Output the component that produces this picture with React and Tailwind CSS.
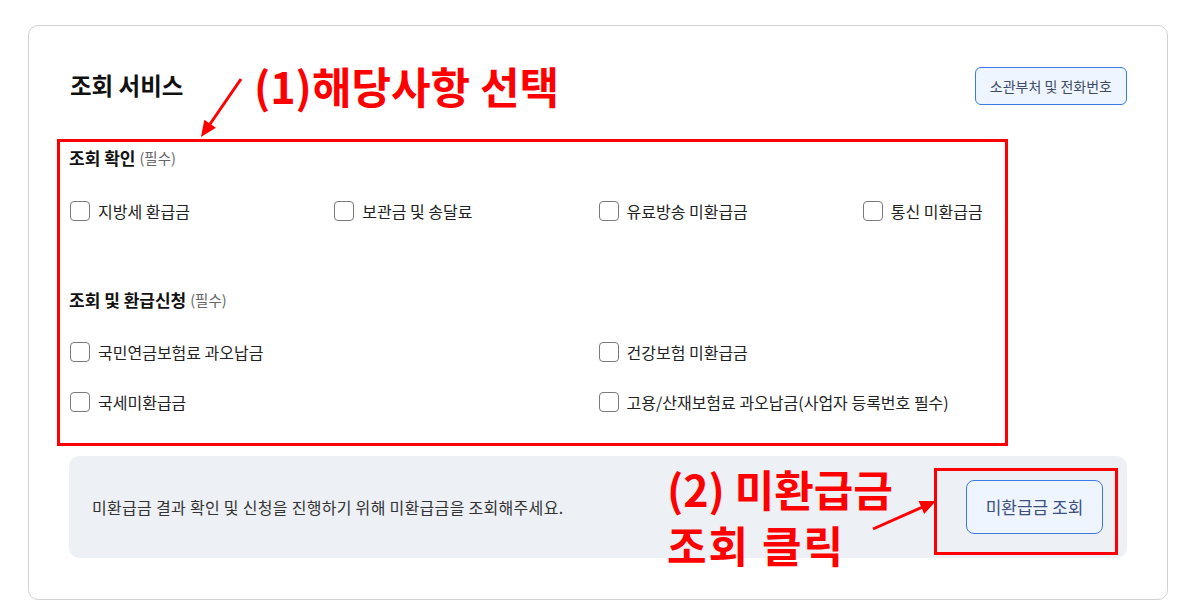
import React from "react";

const Check = ({ label }) => (
  <label className="flex items-center gap-2 h-6 text-[16px] text-[#222]">
    <span className="w-5 h-5 rounded-[4px] border border-[#7a7a7a] bg-white shrink-0" />
    <span>{label}</span>
  </label>
);

const Heading = ({ children }) => (
  <div className="h-6 flex items-center">
    <span className="text-[17px] font-bold text-[#111]">{children}</span>
    <span className="ml-1 text-[14.5px] text-[#666]">(필수)</span>
  </div>
);

export default function App() {
  return (
    <div className="relative w-[1185px] h-[612px] bg-white pt-[25px] pl-[28px] font-['Noto_Sans_CJK_KR',sans-serif]">
      <div className="w-[1140px] rounded-[10px] border border-[#d2d2d2] px-[40px] pt-[41px] pb-[41px]">
        <div className="flex items-center justify-between h-[38px]">
          <h2 className="text-[23.5px] font-bold text-[#111] pl-px">조회 서비스</h2>
          <button className="h-[38px] px-[14px] rounded-[6px] border border-[#3b7be6] bg-[#eef5ff] text-[14px] text-[#3e4b66]">
            소관부처 및 전화번호
          </button>
        </div>

        <div className="mt-[41px]">
          <Heading>조회 확인</Heading>
          <div className="grid grid-cols-4 mt-[29px] pl-px">
            <Check label="지방세 환급금" />
            <Check label="보관금 및 송달료" />
            <Check label="유료방송 미환급금" />
            <Check label="통신 미환급금" />
          </div>
        </div>

        <div className="mt-[65px]">
          <Heading>조회 및 환급신청</Heading>
          <div className="grid grid-cols-2 gap-y-[26px] mt-[28px] pl-px">
            <Check label="국민연금보험료 과오납금" />
            <Check label="건강보험 미환급금" />
            <Check label="국세미환급금" />
            <Check label="고용/산재보험료 과오납금(사업자 등록번호 필수)" />
          </div>
        </div>

        <div className="mt-[42px] h-[102px] rounded-[10px] bg-[#edf0f5] pl-[23px] pr-[24px] flex items-center justify-between">
          <p className="text-[16px] tracking-[0.3px] text-[#333]">미환급금 결과 확인 및 신청을 진행하기 위해 미환급금을 조회해주세요.</p>
          <button className="w-[137px] h-[54px] rounded-[8px] border border-[#3b7be6] bg-[#eef5ff] text-[17px] text-[#3d5080]">
            미환급금 조회
          </button>
        </div>
      </div>

      {/* annotations */}
      <div className="absolute left-[57px] top-[139px] w-[951px] h-[307px] border-[3px] border-[#ff0000] pointer-events-none" />
      <div className="absolute left-[934px] top-[468px] w-[184px] h-[87px] border-[3px] border-[#ff0000] pointer-events-none" />
      <div className="absolute left-[254px] top-[57px] text-[43px] leading-[56px] font-bold text-[#ff0000] whitespace-nowrap">
        (1)해당사항 선택
      </div>
      <div className="absolute left-[667px] top-[460px] text-[43px] leading-[56px] font-bold text-[#ff0000] whitespace-nowrap">
        (2) 미환급금
        <br />
        <span className="tracking-[2px]">조회 클릭</span>
      </div>
      <svg className="absolute inset-0 pointer-events-none" width="1185" height="612" viewBox="0 0 1185 612">
        <line x1="241" y1="79" x2="208" y2="127" stroke="#ff0000" strokeWidth="3" />
        <polygon points="201,137 215.9,127.8 204.3,119.8" fill="#ff0000" />
        <line x1="873" y1="529" x2="926" y2="505.5" stroke="#ff0000" strokeWidth="3" />
        <polygon points="936,501 924.2,513.9 918.6,501.1" fill="#ff0000" />
      </svg>
    </div>
  );
}
